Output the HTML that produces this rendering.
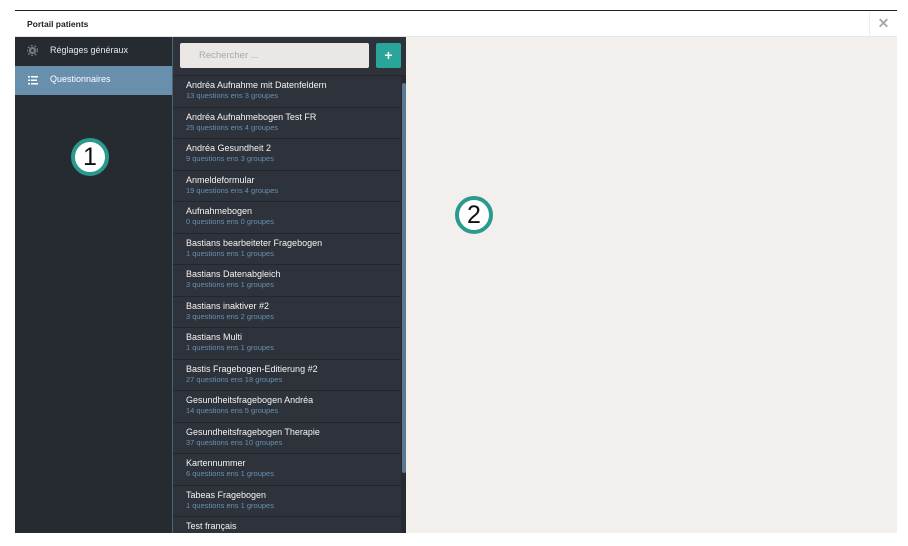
<!DOCTYPE html>
<html><head><meta charset="utf-8"><style>
*{margin:0;padding:0;box-sizing:border-box}
body{width:908px;height:546px;background:#fff;font-family:"Liberation Sans",sans-serif;position:relative;overflow:hidden}
.top{position:absolute;left:15px;top:10px;width:882px;height:1px;background:#222}
.hdr{position:absolute;left:15px;top:11px;width:882px;height:26px;background:#fff;border-bottom:1px solid #e6e6e6}
.hdr .t{position:absolute;left:12px;top:8px;font-size:8.5px;font-weight:bold;color:#222}
.hdr .x{position:absolute;right:0;top:0;width:28px;height:26px;border-left:1px solid #eee;color:#aaa;font-size:14px;font-weight:bold;text-align:center;line-height:25px}
.side{position:absolute;left:15px;top:37px;width:157px;height:496px;background:#262b32}
.si{height:29px;color:#e8e8e8;font-size:9px;position:relative}
.si span{position:absolute;left:35px;top:8px}
.si.act{background:#6890ad;color:#fff}
.list{position:absolute;left:172px;top:37px;width:234px;height:496px;background:#2e333b;border-left:1px solid #4d6478;overflow:hidden}
.srch{position:absolute;left:7px;top:6px;width:189px;height:25px;background:#ebe7e4;border-radius:2px;color:#a8a8a8;font-size:9.5px;padding:7px 0 0 19px}
.add{position:absolute;left:203px;top:6px;width:25px;height:25px;background:#2aa59a;border-radius:2px;color:#fff;font-weight:bold;font-size:14px;text-align:center;line-height:24px}
.items{position:absolute;left:0;top:38px;width:228px}
.it{height:31.5px;border-top:1px solid #23272d;padding:4px 0 0 13px}
.it .a{color:#f4f4f4;font-size:9px;line-height:11px}
.it .b{color:#6690b0;font-size:7.5px;line-height:10px}
.sb{position:absolute;left:228px;top:38px;width:6px;height:458px;background:#262b32}
.sb div{position:absolute;left:1px;top:8px;width:4px;height:390px;background:#5b7890;border-radius:2px}
.right{position:absolute;left:406px;top:37px;width:491px;height:496px;background:#f2efec}
.c{position:absolute;width:38px;height:38px;border:4px solid #2a9a8f;border-radius:50%;background:#fff;color:#111;font-size:25px;text-align:center;line-height:30px}
</style></head><body>
<div class="top"></div>
<div class="hdr"><div class="t">Portail patients</div><div class="x">✕</div></div>
<div class="side">
<div class="si"><svg style="position:absolute;left:12px;top:8px" width="11" height="11" viewBox="0 0 12 12"><circle cx="6" cy="6" r="4" fill="#777"/><circle cx="6" cy="6" r="5.5" fill="none" stroke="#777" stroke-width="1.6" stroke-dasharray="2 2"/><circle cx="6" cy="6" r="1.5" fill="#262b32"/></svg><span>Réglages généraux</span></div>
<div class="si act"><svg style="position:absolute;left:13px;top:10px" width="10" height="9" viewBox="0 0 10 9"><g fill="#fff"><rect x="0" y="0" width="2" height="1.5"/><rect x="3" y="0" width="7" height="1.5"/><rect x="0" y="3.5" width="2" height="1.5"/><rect x="3" y="3.5" width="6" height="1.5"/><rect x="0" y="7" width="2" height="1.5"/><rect x="3" y="7" width="7" height="1.5"/></g></svg><span>Questionnaires</span></div>
</div>
<div class="list">
<div class="srch">Rechercher ...</div><div class="add">+</div>
<div class="items">
<div class="it"><div class="a">Andréa Aufnahme mit Datenfeldern</div><div class="b">13 questions ens 3 groupes</div></div>
<div class="it"><div class="a">Andréa Aufnahmebogen Test FR</div><div class="b">25 questions ens 4 groupes</div></div>
<div class="it"><div class="a">Andréa Gesundheit 2</div><div class="b">9 questions ens 3 groupes</div></div>
<div class="it"><div class="a">Anmeldeformular</div><div class="b">19 questions ens 4 groupes</div></div>
<div class="it"><div class="a">Aufnahmebogen</div><div class="b">0 questions ens 0 groupes</div></div>
<div class="it"><div class="a">Bastians bearbeiteter Fragebogen</div><div class="b">1 questions ens 1 groupes</div></div>
<div class="it"><div class="a">Bastians Datenabgleich</div><div class="b">3 questions ens 1 groupes</div></div>
<div class="it"><div class="a">Bastians inaktiver #2</div><div class="b">3 questions ens 2 groupes</div></div>
<div class="it"><div class="a">Bastians Multi</div><div class="b">1 questions ens 1 groupes</div></div>
<div class="it"><div class="a">Bastis Fragebogen-Editierung #2</div><div class="b">27 questions ens 18 groupes</div></div>
<div class="it"><div class="a">Gesundheitsfragebogen Andréa</div><div class="b">14 questions ens 5 groupes</div></div>
<div class="it"><div class="a">Gesundheitsfragebogen Therapie</div><div class="b">37 questions ens 10 groupes</div></div>
<div class="it"><div class="a">Kartennummer</div><div class="b">6 questions ens 1 groupes</div></div>
<div class="it"><div class="a">Tabeas Fragebogen</div><div class="b">1 questions ens 1 groupes</div></div>
<div class="it"><div class="a">Test français</div><div class="b">2 questions ens 1 groupes</div></div>
</div>
<div class="sb"><div></div></div>
</div>
<div class="right"></div>
<div class="c" style="left:71px;top:138px">1</div>
<div class="c" style="left:455px;top:196px">2</div>
</body></html>
